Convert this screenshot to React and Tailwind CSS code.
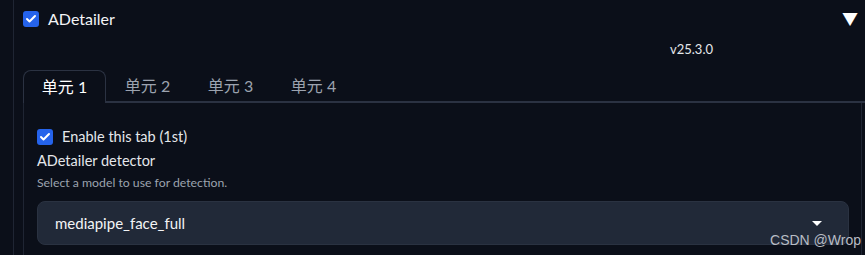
import { Check } from 'lucide-react';

const TABS = ['单元 1', '单元 2', '单元 3', '单元 4'];

function Box() {
  return (
    <span className="w-4 h-4 rounded-[3px] bg-[#2563eb] flex items-center justify-center shrink-0">
      <Check className="w-3 h-3 text-white" strokeWidth={4} />
    </span>
  );
}

export default function App() {
  return (
    <div
      className="w-[865px] h-[255px] bg-[#0b0f19] overflow-hidden relative"
      style={{ fontFamily: 'Lato, "Noto Sans CJK SC", sans-serif' }}
    >
      <div className="ml-[13px] h-full border-l border-[#1f2533] pl-[9px]">
        {/* Header */}
        <div className="flex items-center h-[37px] pr-[7px]">
          <Box />
          <span className="ml-[9px] text-[16px] text-[#f3f4f6]">ADetailer</span>
          <span className="ml-auto text-[16px] text-white leading-none">▼</span>
        </div>
        <div className="h-[33px] flex items-start justify-end pr-[152px] pt-[3px]">
          <span className="text-[13px] text-[#e5e7eb]">v25.3.0</span>
        </div>

        {/* Tabs */}
        <div className="flex items-end h-[33px]">
          <div className="w-[83px] h-[33px] border border-b-0 border-[#2b3242] rounded-t-[8px] flex items-center justify-center text-[16px] text-white">
            {TABS[0]}
          </div>
          <div className="flex-1 flex items-center h-[33px] border-b-2 border-[#2b3242]">
            {TABS.slice(1).map((t) => (
              <span key={t} className="w-[83px] text-center text-[16px] text-[#9ca3af]">
                {t}
              </span>
            ))}
          </div>
        </div>

        {/* Panel */}
        <div className="border-l border-r border-[#1f2533] mr-[3px] h-[200px] pl-[13px] pr-[12px] pt-[25px]">
          <div className="flex items-center gap-[9px] h-[17px]">
            <Box />
            <span className="text-[14.5px] text-[#e5e7eb]">Enable this tab (1st)</span>
          </div>
          <div className="mt-[5px] text-[14.5px] text-[#e5e7eb]">ADetailer detector</div>
          <div className="mt-[2px] text-[12.25px] text-[#9ca3af]">Select a model to use for detection.</div>
          <div className="mt-[9px] h-[44px] rounded-[8px] bg-[#212938] border border-[#2a3241] flex items-center pl-[17px] pr-[18px]">
            <span className="text-[15px] text-[#f3f4f6]">mediapipe_face_full</span>
            <span className="ml-auto mr-[8px] w-0 h-0 border-l-[5px] border-r-[5px] border-t-[5px] border-l-transparent border-r-transparent border-t-white" />
          </div>
        </div>
      </div>

      {/* watermark */}
      <div
        className="absolute right-[4px] bottom-[4px] text-[14px] text-[#b8bcc4]"
        style={{ fontFamily: '"Liberation Sans", Arial, sans-serif' }}
      >
        CSDN @Wrop
      </div>
    </div>
  );
}
